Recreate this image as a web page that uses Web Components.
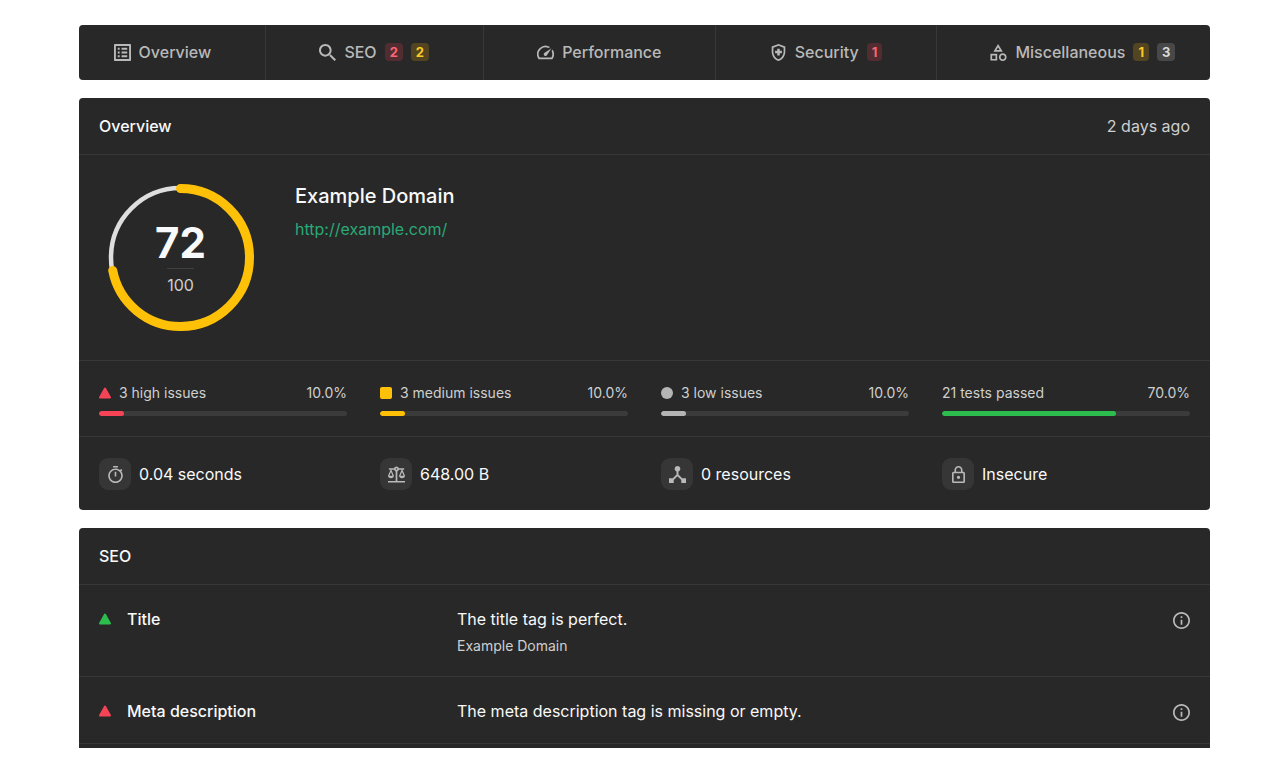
<!DOCTYPE html>
<html lang="en">
<head>
<meta charset="utf-8">
<meta name="viewport" content="width=device-width, initial-scale=1">
<title>Example Domain report</title>
<style>
  body {
    margin: 0;
    background: #fff;
    color: #f8f9fa;
    font: 400 16px/24px Inter, "Liberation Sans", sans-serif;
    --card: #282828;
    --line: #383838;
    --muted: #b9b9b9;
    --soft: #cfcfcf;
    --red: #f64456;
    --yellow: #ffc107;
    --gray: #b5b5b5;
    --green: #2dbd4e;
  }
</style>
</head>
<body>
<report-page>
  <report-nav>
    <nav-item icon="list" href="#overview">Overview</nav-item>
    <nav-item icon="search" href="#seo">SEO<count-badge slot="badges" tone="high">2</count-badge><count-badge slot="badges" tone="medium">2</count-badge></nav-item>
    <nav-item icon="speed" href="#performance">Performance</nav-item>
    <nav-item icon="shield" href="#security">Security<count-badge slot="badges" tone="high">1</count-badge></nav-item>
    <nav-item icon="category" href="#misc">Miscellaneous<count-badge slot="badges" tone="medium">1</count-badge><count-badge slot="badges" tone="low">3</count-badge></nav-item>
  </report-nav>

  <report-card id="overview">
    <span slot="title">Overview</span>
    <span slot="aside">2 days ago</span>
    <site-summary score="72" href="http://example.com/">Example Domain</site-summary>
    <stat-row class="issues">
      <issue-meter shape="triangle" tone="red" value="10.0">3 high issues</issue-meter>
      <issue-meter shape="square" tone="yellow" value="10.0">3 medium issues</issue-meter>
      <issue-meter shape="circle" tone="gray" value="10.0">3 low issues</issue-meter>
      <issue-meter tone="green" value="70.0">21 tests passed</issue-meter>
    </stat-row>
    <stat-row>
      <info-fact icon="timer">0.04 seconds</info-fact>
      <info-fact icon="balance">648.00 B</info-fact>
      <info-fact icon="hub">0 resources</info-fact>
      <info-fact icon="lock">Insecure</info-fact>
    </stat-row>
  </report-card>

  <report-card id="seo" open-end>
    <span slot="title">SEO</span>
    <test-result name="Title" tone="green">The title tag is perfect.<span slot="detail">Example Domain</span></test-result>
    <test-result name="Meta description" tone="red">The meta description tag is missing or empty.</test-result>
  </report-card>
</report-page>

<script>
const ICONS = {
  list: ['3 3 18 18', 'M11 7h6v2h-6zm0 4h6v2h-6zm0 4h6v2h-6zM7 7h2v2H7zm0 4h2v2H7zm0 4h2v2H7zM20.1 3H3.9c-.5 0-.9.4-.9.9v16.2c0 .4.4.9.9.9h16.2c.4 0 .9-.5.9-.9V3.9c0-.5-.5-.9-.9-.9zM19 19H5V5h14v14z'],
  search: ['3 3 17.5 17.5', 'M15.5 14h-.79l-.28-.27C15.41 12.59 16 11.11 16 9.5 16 5.91 13.09 3 9.5 3S3 5.91 3 9.5 5.91 16 9.5 16c1.61 0 3.09-.59 4.23-1.57l.27.28v.79l5 4.99L20.49 19l-4.99-5zm-6 0C7.01 14 5 11.99 5 9.5S7.01 5 9.5 5 14 7.01 14 9.5 11.99 14 9.5 14z'],
  speed: ['2 2 20 20', 'M20.38 8.57l-1.23 1.85a8 8 0 0 1-.22 7.58H5.07A8 8 0 0 1 15.58 6.85l1.85-1.23A10 10 0 0 0 3.35 19a2 2 0 0 0 1.72 1h13.85a2 2 0 0 0 1.74-1 10 10 0 0 0-.27-10.44zM10.59 15.41a2 2 0 0 0 2.83 0l5.66-8.49-8.49 5.66a2 2 0 0 0 0 2.83z'],
  shield: ['2 2 20 20', 'M10.5 13H8v-3h2.5V7.5h3V10H16v3h-2.5v2.5h-3V13zM12 2L4 5v6.09c0 5.05 3.41 9.76 8 10.91 4.59-1.15 8-5.86 8-10.91V5l-8-3zm6 9.09c0 4-2.55 7.7-6 8.83-3.45-1.13-6-4.82-6-8.83v-4.7l6-2.25 6 2.25v4.7z'],
  category: ['2.5 2 20 20', 'M12 2l-5.5 9h11L12 2zm0 3.84L13.93 9h-3.87L12 5.84zM17.5 13c-2.49 0-4.5 2.01-4.5 4.5s2.01 4.5 4.5 4.5 4.5-2.01 4.5-4.5-2.01-4.5-4.5-4.5zm0 7c-1.38 0-2.5-1.12-2.5-2.5s1.12-2.5 2.5-2.5 2.5 1.12 2.5 2.5-1.12 2.5-2.5 2.5zM3 21.5h8v-8H3v8zm2-6h4v4H5v-4z'],
  timer: ['1.5 1 21 21', 'M15 1H9v2h6V1zm-4 13h2V8h-2v6zm8.03-6.61l1.42-1.42c-.43-.51-.9-.99-1.41-1.41l-1.42 1.42C16.07 4.74 14.12 4 12 4c-4.97 0-9 4.03-9 9s4.02 9 9 9 9-4.03 9-9c0-2.12-.74-4.07-1.97-5.61zM12 20c-3.87 0-7-3.13-7-7s3.13-7 7-7 7 3.13 7 7-3.13 7-7 7z'],
  balance: ['2 1.5 20 20', 'M13 7.83c.85-.3 1.53-.98 1.83-1.83H18l-3 7c0 1.66 1.57 3 3.5 3s3.5-1.34 3.5-3l-3-7h2V4h-6.17C14.42 2.83 13.31 2 12 2s-2.42.83-2.83 2H3v2h2l-3 7c0 1.66 1.57 3 3.5 3S9 14.66 9 13L6 6h3.17c.3.85.98 1.53 1.83 1.83V19H2v2h20v-2h-9V7.83zM20.37 13h-3.74l1.87-4.36L20.37 13zm-13 0H3.63L5.5 8.64 7.37 13zM12 6c-.55 0-1-.45-1-1s.45-1 1-1 1 .45 1 1-.45 1-1 1z'],
  hub: ['3 3 18 18', 'M17 16l-4-4V8.82C14.16 8.4 15 7.3 15 6c0-1.66-1.34-3-3-3S9 4.34 9 6c0 1.3.84 2.4 2 2.82V12l-4 4H3v5h5v-3.05l4-4.2 4 4.2V21h5v-5h-4z'],
  lock: ['1.5 1 21 21', 'M18 8h-1V6c0-2.76-2.24-5-5-5S7 3.24 7 6v2H6c-1.1 0-2 .9-2 2v10c0 1.1.9 2 2 2h12c1.1 0 2-.9 2-2V10c0-1.1-.9-2-2-2zM9 6c0-1.66 1.34-3 3-3s3 1.34 3 3v2H9V6zm9 14H6V10h12v10zm-6-3c1.1 0 2-.9 2-2s-.9-2-2-2-2 .9-2 2 .9 2 2 2z'],
  info: ['2 2 20 20', 'M11 7h2v2h-2zm0 4h2v6h-2zm1-9C6.48 2 2 6.48 2 12s4.48 10 10 10 10-4.48 10-10S17.52 2 12 2zm0 18c-4.41 0-8-3.59-8-8s3.59-8 8-8 8 3.59 8 8-3.59 8-8 8z']
};
const icon = (name) =>
  `<svg class="icon" viewBox="${ICONS[name][0]}" aria-hidden="true"><path fill="currentColor" d="${ICONS[name][1]}"/></svg>`;
const ICON_CSS = '.icon { display: block; width: 17px; height: 17px; flex: none; }';

const SHAPES = {
  triangle: '<path d="M6 1.5 L11 10.5 H1 Z" stroke-width="2" stroke-linejoin="round"/>',
  square: '<rect width="12" height="12" rx="2"/>',
  circle: '<circle cx="6" cy="6" r="6"/>'
};
const marker = (shape, tone) =>
  `<svg class="marker" viewBox="0 0 12 12" fill="var(--${tone})" stroke="var(--${tone})" stroke-width="0" aria-hidden="true">${SHAPES[shape]}</svg>`;
const MARKER_CSS = '.marker { display: block; width: 12px; height: 12px; flex: none; }';

class Base extends HTMLElement {
  connectedCallback() {
    if (this.shadowRoot) return;
    this.attachShadow({ mode: 'open' }).innerHTML = this.render();
  }
  attr(name) { return this.getAttribute(name) || ''; }
}

customElements.define('report-page', class extends Base {
  render() {
    return `<style>
      :host { display: block; padding: 25px 70px 20px 79px; }
      main { display: flex; flex-direction: column; gap: 18px; }
    </style><main><slot></slot></main>`;
  }
});

customElements.define('report-nav', class extends Base {
  render() {
    return `<style>
      :host { display: block; }
      nav { display: flex; background: var(--card); border-radius: 4px; }
      ::slotted(*) { flex: 1 1 auto; padding: 15px 19px 16px; }
      ::slotted(:first-child) { padding-left: 0; }
      ::slotted(:last-child) { padding-right: 0; }
      ::slotted(:not(:first-child)) { border-left: 1px solid var(--line); }
    </style><nav><slot></slot></nav>`;
  }
});

customElements.define('nav-item', class extends Base {
  render() {
    return `<style>
      :host { display: flex; justify-content: center; align-items: center; }
      a { display: flex; align-items: center; gap: 8px; color: var(--muted); font-weight: 500; text-decoration: none; white-space: nowrap; }
      ${ICON_CSS}
    </style><a href="${this.attr('href')}">${icon(this.attr('icon'))}<span><slot></slot></span><slot name="badges"></slot></a>`;
  }
});

customElements.define('count-badge', class extends Base {
  render() {
    return `<style>
      :host { display: block; padding: 0 5px; border-radius: 4px; font-size: 13px; line-height: 18px; font-weight: 700; }
      :host([tone="high"]) { color: #fb6573; background: #512d31; }
      :host([tone="medium"]) { color: #ffc926; background: #534521; }
      :host([tone="low"]) { color: #dadada; background: #484848; }
    </style><slot></slot>`;
  }
});

customElements.define('report-card', class extends Base {
  render() {
    return `<style>
      :host { display: block; background: var(--card); border-radius: 4px; }
      :host([open-end]) { padding-bottom: 4px; border-radius: 4px 4px 0 0; }
      header { display: flex; justify-content: space-between; align-items: center; padding: 16px 20px; border-bottom: 1px solid var(--line); }
      h2 { margin: 0; font-size: inherit; font-weight: 500; }
      .aside { color: var(--soft); }
    </style>
    <header><h2><slot name="title"></slot></h2><div class="aside"><slot name="aside"></slot></div></header>
    <slot></slot>`;
  }
});

customElements.define('site-summary', class extends Base {
  render() {
    const score = this.attr('score');
    return `<style>
      :host { display: flex; gap: 41px; padding: 29px 28px; }
      .score { display: grid; flex: none; width: 147px; height: 147px; place-items: center; }
      .score > * { grid-area: 1 / 1; }
      svg { display: block; width: 147px; height: 147px; }
      circle { fill: none; }
      .numbers { display: flex; flex-direction: column; align-items: center; }
      .value { font-size: 42px; line-height: 50px; font-weight: 700; }
      .max { padding-top: 4px; border-top: 1px solid #404040; color: var(--soft); }
      h1 { margin: 0 0 9px; font-size: 20px; line-height: 24px; font-weight: 500; }
      a { color: #2aa876; text-decoration: none; }
    </style>
    <div class="score">
      <svg viewBox="0 0 147 147" aria-hidden="true">
        <circle cx="73.5" cy="73.5" r="69.5" stroke="#dedede" stroke-width="4.5"/>
        <circle cx="73.5" cy="73.5" r="69" stroke="var(--yellow)" stroke-width="9" stroke-linecap="round"
          pathLength="100" stroke-dasharray="${score} 100" transform="rotate(-90 73.5 73.5)"/>
      </svg>
      <div class="numbers"><span class="value">${score}</span><span class="max">100</span></div>
    </div>
    <div><h1><slot></slot></h1><a href="${this.attr('href')}">${this.attr('href')}</a></div>`;
  }
});

customElements.define('stat-row', class extends Base {
  render() {
    return `<style>
      :host { display: grid; grid-template-columns: repeat(4, 1fr); gap: 33px; padding: 21px 20px 20px; border-top: 1px solid var(--line); }
    </style><slot></slot>`;
  }
});

customElements.define('issue-meter', class extends Base {
  render() {
    const tone = this.attr('tone'), value = this.attr('value'), shape = this.attr('shape');
    return `<style>
      :host { display: block; color: var(--soft); font-size: 14px; line-height: 22px; }
      .head { display: flex; align-items: center; gap: 8px; }
      .share { margin-left: auto; }
      .bar { margin-top: 7px; height: 5px; border-radius: 3px; background: #3b3b3b; overflow: hidden; }
      .fill { width: ${value}%; height: 5px; border-radius: 3px; background: var(--${tone}); }
      ${MARKER_CSS}
    </style>
    <div class="head">${shape ? marker(shape, tone) : ''}<span><slot></slot></span><span class="share">${value}%</span></div>
    <div class="bar" role="progressbar" aria-valuemin="0" aria-valuemax="100" aria-valuenow="${value}"><div class="fill"></div></div>`;
  }
});

customElements.define('info-fact', class extends Base {
  render() {
    return `<style>
      :host { display: flex; align-items: center; gap: 8px; }
      .tile { display: grid; place-items: center; flex: none; width: 32px; height: 32px; border-radius: 9px; background: #363636; color: var(--muted); }
      ${ICON_CSS}
    </style><span class="tile">${icon(this.attr('icon'))}</span><span><slot></slot></span>`;
  }
});

customElements.define('test-result', class extends Base {
  render() {
    return `<style>
      :host { display: grid; grid-template-columns: 1fr 2fr auto; align-items: start; padding: 22px 20px 20px; border-bottom: 1px solid var(--line); }
      .name { display: flex; align-items: center; gap: 16px; }
      h3 { margin: 0; font-size: inherit; font-weight: 500; }
      ::slotted([slot="detail"]) { display: block; margin-top: 4px; color: var(--soft); font-size: 14px; line-height: 21px; }
      button { display: block; margin: 5px 0 0; padding: 0; border: 0; background: none; color: var(--muted); cursor: pointer; }
      ${ICON_CSS} ${MARKER_CSS}
    </style>
    <div class="name">${marker('triangle', this.attr('tone'))}<h3>${this.attr('name')}</h3></div>
    <div><slot></slot><slot name="detail"></slot></div>
    <button type="button" aria-label="More information">${icon('info')}</button>`;
  }
});
</script>
</body>
</html>
